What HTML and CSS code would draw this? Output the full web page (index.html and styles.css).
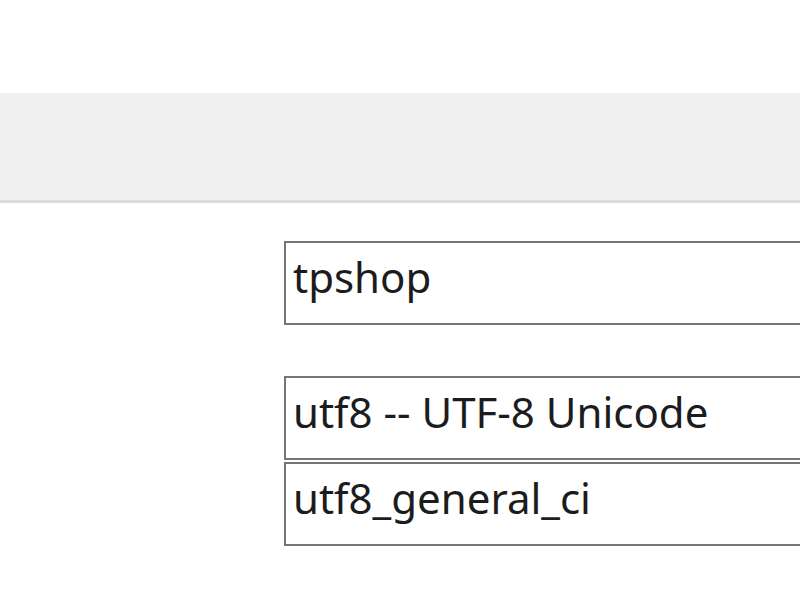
FILE: index.html
```html
<!DOCTYPE html>
<html lang="zh-CN">
<head>
  <meta charset="UTF-8" />
  <title>新建数据库</title>
  <link rel="stylesheet" href="styles.css">
</head>
<body>
  <div class="topbar"></div>
  <div class="tabs"></div>

  <form class="db-form">
    <input class="field" type="text" value="tpshop" />
    <div class="charset-group">
      <input class="field" type="text" value="utf8 -- UTF-8 Unicode" />
      <input class="field" type="text" value="utf8_general_ci" />
    </div>
  </form>
</body>
</html>
```

FILE: styles.css
```css
body {
  margin: 0;
  background: #fff;
  font-family: 'Noto Sans', 'Noto Sans CJK SC', sans-serif;
  overflow: hidden;
}

.topbar {
  height: 93px;
}

.tabs {
  height: 107px;
  background: #f0f0f0;
  border-bottom: 3px solid #dadada;
}

.db-form {
  display: flex;
  flex-direction: column;
  gap: 51px;
  padding: 38px 0 0 284px;
}

.charset-group {
  display: flex;
  flex-direction: column;
  gap: 2px;
}

.field {
  box-sizing: border-box;
  width: 700px;
  height: 84px;
  margin: 0;
  padding: 0 0 14px 7px;
  border: 2px solid #757575;
  border-radius: 0;
  background: #fff;
  color: #1c1c1c;
  font-family: inherit;
  font-size: 42px;
  outline: none;
}
```
